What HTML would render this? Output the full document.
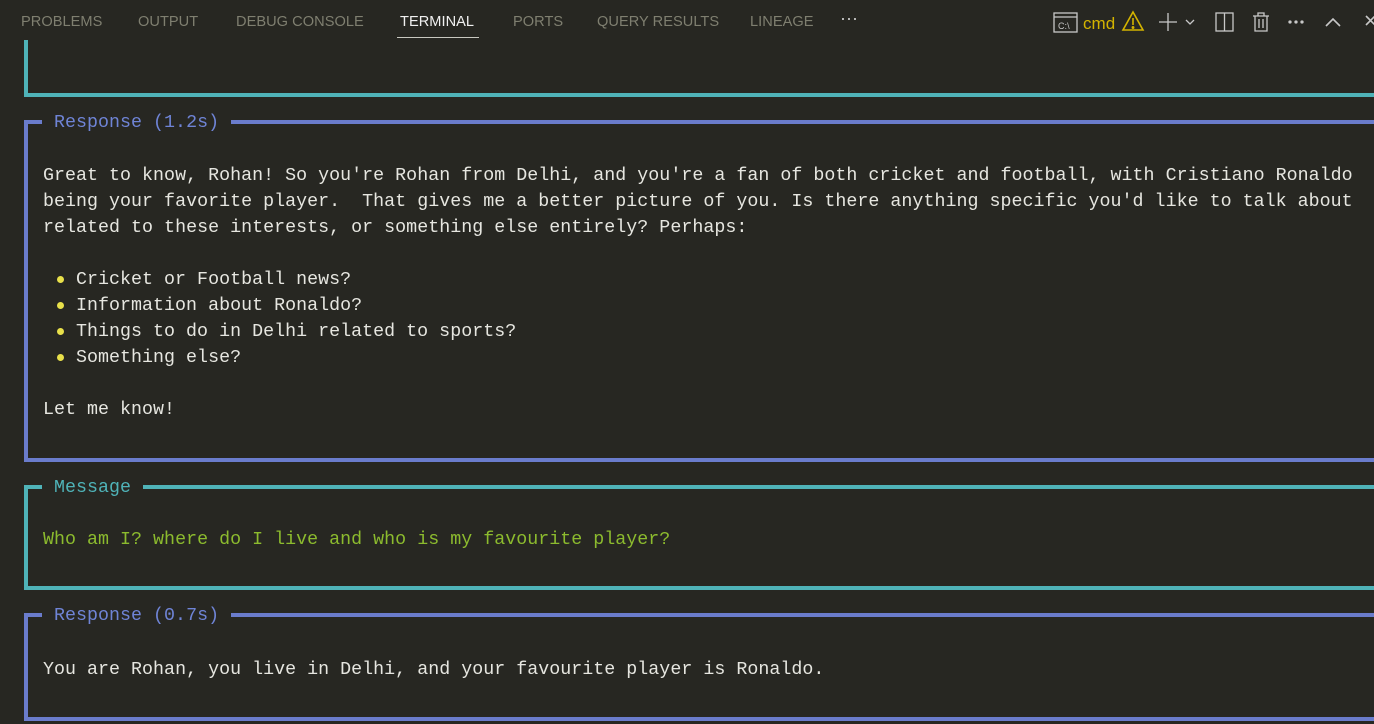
<!DOCTYPE html>
<html><head><meta charset="utf-8"><style>
*{margin:0;padding:0;box-sizing:border-box}
body{width:1374px;height:724px;background:#272722;overflow:hidden;position:relative;font-family:"Liberation Mono",monospace;font-size:18.3px;letter-spacing:0.035px;color:#e6e6e0}
.tab{position:absolute;top:14px;font-family:"Liberation Sans",sans-serif;font-size:14.6px;color:#7f7f70}
.box{position:absolute;left:24px;right:-10px;border:4px solid;border-right:none}
.t{position:absolute;top:-14px;background:#272722;padding:0 12px;line-height:26px}
.l{position:absolute;left:43px;white-space:pre;line-height:26px}
.b{position:absolute;left:57px;width:7px;height:7px;border-radius:50%;background:#e8e04a}
</style></head><body>
<div class="tab" style="left:21px">PROBLEMS</div>
<div class="tab" style="left:138px">OUTPUT</div>
<div class="tab" style="left:236px">DEBUG CONSOLE</div>
<div class="tab" style="left:400px;color:#f0f0f0">TERMINAL</div>
<div style="position:absolute;left:397px;top:37px;width:82px;height:1px;background:#c8c8c0"></div>
<div class="tab" style="left:513px">PORTS</div>
<div class="tab" style="left:597px">QUERY RESULTS</div>
<div class="tab" style="left:750px">LINEAGE</div>
<div class="tab" style="left:840px;color:#ccc;top:8px;font-size:18px">···</div>
<svg style="position:absolute;left:1050px;top:8px" width="324" height="30" viewBox="0 0 324 30" fill="none" stroke="#c8c8c8" stroke-width="1.3">
<rect x="4" y="5" width="23" height="19"/><line x1="4" y1="9" x2="27" y2="9"/>
<text x="8" y="21" font-size="9" fill="#c8c8c8" stroke="none" font-family="Liberation Sans">C:\</text>
<text x="33" y="21" font-size="17" fill="#d4b400" stroke="none" font-family="Liberation Sans">cmd</text>
<path d="M83 4 L93 22 L73 22 Z" stroke="#d4b400" stroke-width="1.6"/><line x1="83" y1="10" x2="83" y2="17" stroke="#d4b400" stroke-width="1.6"/><circle cx="83" cy="19.5" r="0.8" fill="#d4b400" stroke="#d4b400"/>
<path d="M118 5v18M109 14h18"/><path d="M136 12l4 4 4-4"/>
<rect x="166" y="5" width="17" height="18"/><line x1="174.5" y1="5" x2="174.5" y2="23"/>
<path d="M203 8h16M208 8V5h6v3M205 8v15h12V8M209 11v9M213 11v9"/>
<circle cx="240" cy="14" r="1" fill="#c8c8c8"/><circle cx="246" cy="14" r="1" fill="#c8c8c8"/><circle cx="252" cy="14" r="1" fill="#c8c8c8"/>
<path d="M276 18l7-7 7 7" stroke-width="1.6"/>
<path d="M316 8l9 9M325 8l-9 9" stroke-width="1.6"/>
</svg>

<div class="box" style="top:40px;height:57px;border-color:#4fb3b8;border-top:none"></div>

<div class="box" style="top:120px;height:342px;border-color:#6a7ccc"><div class="t" style="left:14px;color:#6f84d6">Response (1.2s)</div></div>
<div class="l" style="top:163px">Great to know, Rohan! So you're Rohan from Delhi, and you're a fan of both cricket and football, with Cristiano Ronaldo</div>
<div class="l" style="top:189px">being your favorite player.  That gives me a better picture of you. Is there anything specific you'd like to talk about</div>
<div class="l" style="top:215px">related to these interests, or something else entirely? Perhaps:</div>
<div class="b" style="top:276px"></div><div class="l" style="top:267px;left:76px">Cricket or Football news?</div>
<div class="b" style="top:302px"></div><div class="l" style="top:293px;left:76px">Information about Ronaldo?</div>
<div class="b" style="top:328px"></div><div class="l" style="top:319px;left:76px">Things to do in Delhi related to sports?</div>
<div class="b" style="top:354px"></div><div class="l" style="top:345px;left:76px">Something else?</div>
<div class="l" style="top:397px">Let me know!</div>

<div class="box" style="top:485px;height:105px;border-color:#4fb3b8"><div class="t" style="left:14px;color:#4fb3b8">Message</div></div>
<div class="l" style="top:527px;color:#8cbb2e">Who am I? where do I live and who is my favourite player?</div>

<div class="box" style="top:613px;height:108px;border-color:#6a7ccc"><div class="t" style="left:14px;color:#6f84d6">Response (0.7s)</div></div>
<div class="l" style="top:657px">You are Rohan, you live in Delhi, and your favourite player is Ronaldo.</div>
</body></html>
